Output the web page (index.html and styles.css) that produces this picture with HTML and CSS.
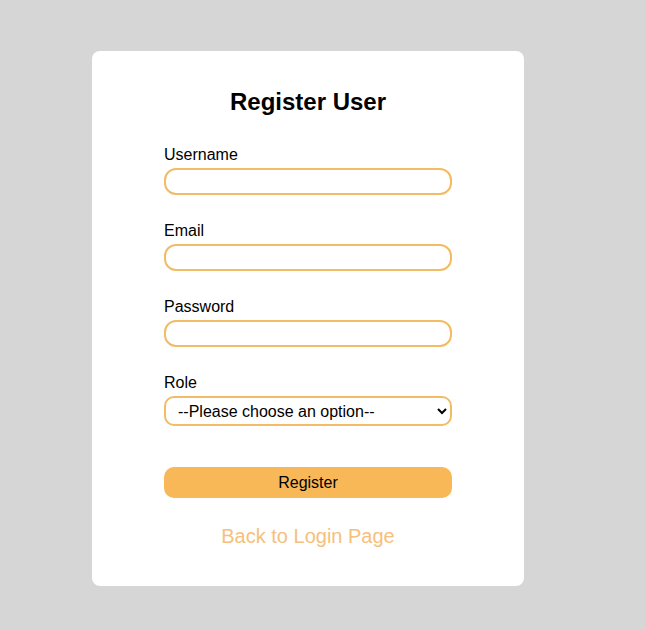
FILE: index.html
```html
<!DOCTYPE html>
<html>
<head>
<meta charset="utf-8">
<link rel="stylesheet" href="styles.css">
</head>
<body>
<div class="page">
  <form class="card">
    <h2 class="title">Register User</h2>
    <div class="field">
      <label class="label">Username</label>
      <input class="input" type="text">
    </div>
    <div class="field">
      <label class="label">Email</label>
      <input class="input" type="email">
    </div>
    <div class="field">
      <label class="label">Password</label>
      <input class="input" type="password">
    </div>
    <div class="field">
      <label class="label">Role</label>
      <select class="select">
        <option>--Please choose an option--</option>
      </select>
    </div>
    <button class="btn" type="button">Register</button>
    <a class="link" href="#">Back to Login Page</a>
  </form>
</div>
</body>
</html>
```
FILE: styles.css
```css
html, body {
  margin: 0;
  padding: 0;
  background: #d6d6d6;
  font-family: "Liberation Sans", Arial, sans-serif;
  height: 100%;
}
.page {
  padding: 51px 0 0 92px;
}
.card {
  width: 432px;
  height: 535px;
  box-sizing: border-box;
  background: #ffffff;
  border-radius: 8px;
  padding: 37px 72px 0;
  display: flex;
  flex-direction: column;
}
.title {
  margin: 0 0 30px;
  text-align: center;
  font-size: 24px;
  font-weight: bold;
  color: #000;
  line-height: 28px;
}
.field {
  display: flex;
  flex-direction: column;
  margin-bottom: 27px;
}
.label {
  font-size: 16px;
  line-height: 18px;
  color: #000;
  margin-bottom: 4px;
}
.input {
  height: 27px;
  box-sizing: border-box;
  border: 2px solid #f2bb66;
  border-radius: 12px;
  padding: 0 10px;
  font-size: 16px;
  outline: none;
  background: #fff;
}
.select {
  height: 30px;
  box-sizing: border-box;
  border: 2px solid #f2bb66;
  border-radius: 10px;
  padding: 0 8px;
  font-family: "Liberation Sans", Arial, sans-serif;
  font-size: 16px;
  color: #000;
  background: #fff;
  outline: none;
}
.btn {
  margin-top: 14px;
  height: 31px;
  border: none;
  border-radius: 10px;
  background: #f8b858;
  font-family: "Liberation Sans", Arial, sans-serif;
  font-size: 16px;
  color: #000;
}
.link {
  margin-top: 27px;
  text-align: center;
  font-size: 20px;
  color: #f6c07c;
  text-decoration: none;
}
```
